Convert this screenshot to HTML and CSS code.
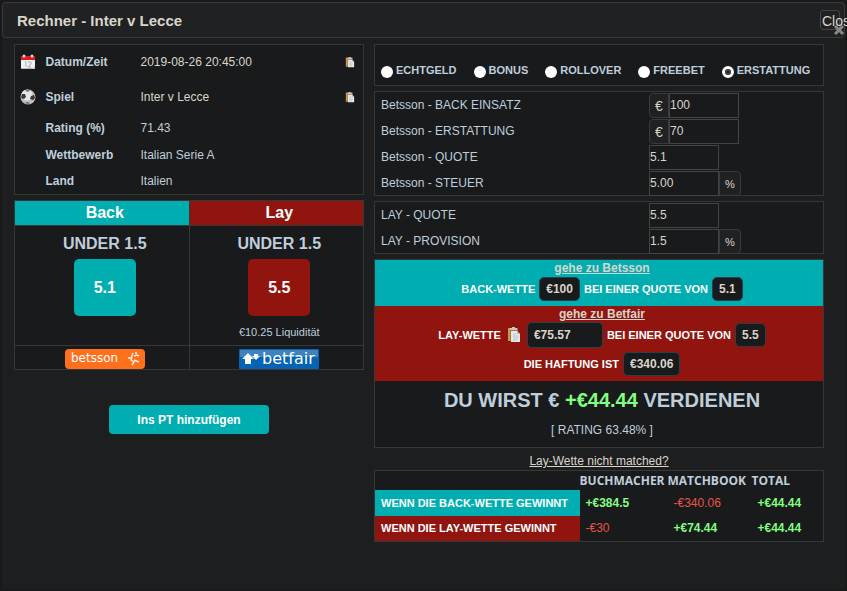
FILE: index.html
```html
<!DOCTYPE html>
<html lang="de">
<head>
  <meta charset="UTF-8">
  <meta name="viewport" content="width=device-width, initial-scale=1.0">
  <title>Rechner - Inter v Lecce</title>
  <link rel="stylesheet" href="styles.css">
</head>
<body>
  <!-- icons used more than once -->
  <svg class="sprite" width="0" height="0">
    <symbol id="paste" viewBox="0 0 14 16">
      <path d="M1 1h10v13H1z" fill="#a8743f"/>
      <path d="M1 1h2v13H1z" fill="#cf9553"/>
      <path d="M3 1h2V0h3v1h2v2H3z" fill="#c4c6c8"/>
      <path d="M4 4h6l3 3v8H4z" fill="#e6e9ea"/>
      <path d="M10 4v3h3z" fill="#b5b9bb"/>
      <path d="M6 7h3M6 9h5M6 11h5M6 13h4" stroke="#bcc0c2" fill="none"/>
    </symbol>
  </svg>

  <div class="dialog">
    <div class="titlebar">
      <h1>Rechner - Inter v Lecce</h1>
      <button class="close" type="button">Close<svg class="x" viewBox="0 0 10 10"><path d="M1 1l8 8M9 1l-8 8" stroke="#888" stroke-width="3"/></svg></button>
    </div>

    <div class="content">
      <div class="left">
        <table class="panel info">
          <tr class="tall">
            <td class="icon">
              <svg width="16" height="16" viewBox="0 0 16 16">
                <path d="M1 2h14v13H1z" fill="#f1f1f1"/>
                <path d="M1 2h14v4H1z" fill="#dd1c1c"/>
                <path d="M1 14h14v1H1z" fill="#b5b5b5"/>
                <circle cx="4" cy="2" r="1.5" fill="#ddd"/>
                <circle cx="12" cy="2" r="1.5" fill="#ddd"/>
                <path d="M5 8h1v5M8 8h3v2l-3 3h3" stroke="#aaa" fill="none"/>
                <path d="M12 15l3-3v3z" fill="#ccc"/>
              </svg>
            </td>
            <th>Datum/Zeit</th>
            <td class="light">2019-08-26 20:45:00</td>
            <td class="copy"><button type="button" aria-label="Kopieren"><svg width="10" height="11"><use href="#paste"/></svg></button></td>
          </tr>
          <tr class="tall">
            <td class="icon">
              <svg width="16" height="16" viewBox="0 0 16 16">
                <circle cx="8" cy="8" r="7.5" fill="#bdbdbd"/>
                <circle cx="7" cy="6" r="5.5" fill="#e6e6e6"/>
                <path d="M2 5l3 0 1 3-2 2-3-1zM11 7l3-1 1 3-2 2-3-1z" fill="#35383a"/>
                <path d="M5 1l4-0.5 1 1.5-3 1zM5 13l3 0 2 2-3 0z" fill="#777"/>
              </svg>
            </td>
            <th>Spiel</th>
            <td class="light">Inter v Lecce</td>
            <td class="copy"><button type="button" aria-label="Kopieren"><svg width="10" height="11"><use href="#paste"/></svg></button></td>
          </tr>
          <tr><td></td><th>Rating (%)</th><td>71.43</td><td></td></tr>
          <tr><td></td><th>Wettbewerb</th><td>Italian Serie A</td><td></td></tr>
          <tr><td></td><th>Land</th><td>Italien</td><td></td></tr>
        </table>

        <table class="odds">
          <tr><th class="teal">Back</th><th class="red">Lay</th></tr>
          <tr class="pick">
            <td>
              <h2>UNDER 1.5</h2>
              <button class="odd teal" type="button">5.1</button>
            </td>
            <td>
              <h2>UNDER 1.5</h2>
              <button class="odd red" type="button">5.5</button>
              <p>€10.25 Liquidität</p>
            </td>
          </tr>
          <tr class="brands">
            <td>
              <a href="#betsson" aria-label="betsson">
                <svg width="80" height="20" viewBox="0 0 80 20">
                  <rect width="80" height="20" rx="4" fill="#ff701c"/>
                  <text x="6" y="13" class="logo" font-size="12">betsson</text>
                  <path d="M63 9l3 0 2-5M67 8l-1 3 3 2-2 3M69 11l5 2M69 7l3-1 2 1" stroke="#ffe9d8" stroke-width="1.5" fill="none"/>
                  <circle cx="71" cy="4" r="1" fill="#fff"/>
                </svg>
              </a>
            </td>
            <td>
              <a href="#betfair" aria-label="betfair">
                <svg width="80" height="20" viewBox="0 0 80 20">
                  <rect width="80" height="20" rx="1" fill="#0463b4"/>
                  <path d="M1 1h78v7H1z" fill="#3d83c0"/>
                  <path d="M9 4l6 6h-3v5H6v-5H3zM15 5h4v2h2l-4 4-4-4h2z" fill="#fff"/>
                  <text x="23" y="15" class="logo" font-size="16">betfair</text>
                </svg>
              </a>
            </td>
          </tr>
        </table>

        <button class="add teal" type="button">Ins PT hinzufügen</button>
      </div>

      <form class="right">
        <div class="panel modes">
          <label><input type="radio" name="mode">ECHTGELD</label>
          <label><input type="radio" name="mode">BONUS</label>
          <label><input type="radio" name="mode">ROLLOVER</label>
          <label><input type="radio" name="mode">FREEBET</label>
          <label><input type="radio" name="mode" checked>ERSTATTUNG</label>
        </div>

        <div class="panel fields">
          <div class="field">
            <label for="stake">Betsson - BACK EINSATZ</label>
            <div class="group"><span class="pre">€</span><input type="text" id="stake" value="100"></div>
          </div>
          <div class="field">
            <label for="refund">Betsson - ERSTATTUNG</label>
            <div class="group"><span class="pre">€</span><input type="text" id="refund" value="70"></div>
          </div>
          <div class="field">
            <label for="back">Betsson - QUOTE</label>
            <div class="group"><input type="text" id="back" value="5.1"></div>
          </div>
          <div class="field">
            <label for="tax">Betsson - STEUER</label>
            <div class="group"><input type="text" id="tax" value="5.00"><span class="post">%</span></div>
          </div>
        </div>

        <div class="panel fields">
          <div class="field">
            <label for="lay">LAY - QUOTE</label>
            <div class="group"><input type="text" id="lay" value="5.5"></div>
          </div>
          <div class="field">
            <label for="commission">LAY - PROVISION</label>
            <div class="group"><input type="text" id="commission" value="1.5"><span class="post">%</span></div>
          </div>
        </div>

        <div class="panel result">
          <div class="bet teal">
            <a href="#betsson">gehe zu Betsson</a>
            <div class="line">BACK-WETTE <span class="value">€100</span> BEI EINER QUOTE VON <span class="value">5.1</span></div>
          </div>
          <div class="bet red">
            <a href="#betfair">gehe zu Betfair</a>
            <div class="line">
              <label for="laystake">LAY-WETTE</label>
              <svg class="paste" width="14" height="16"><use href="#paste"/></svg>
              <input type="text" id="laystake" class="value" value="€75.57">
              BEI EINER QUOTE VON <span class="value">5.5</span>
            </div>
            <div class="line">DIE HAFTUNG IST <span class="value">€340.06</span></div>
          </div>
          <h2>DU WIRST € <span class="plus">+€44.44</span> VERDIENEN</h2>
          <p>[ RATING 63.48% ]</p>
        </div>

        <a class="unmatched" href="#unmatched">Lay-Wette nicht matched?</a>

        <table class="panel totals">
          <tr><td></td><th>BUCHMACHER</th><th>MATCHBOOK</th><th>TOTAL</th></tr>
          <tr>
            <th class="teal">WENN DIE BACK-WETTE GEWINNT</th>
            <td class="plus">+€384.5</td><td class="minus">-€340.06</td><td class="plus">+€44.44</td>
          </tr>
          <tr>
            <th class="red">WENN DIE LAY-WETTE GEWINNT</th>
            <td class="minus">-€30</td><td class="plus">+€74.44</td><td class="plus">+€44.44</td>
          </tr>
        </table>
      </form>
    </div>
  </div>
</body>
</html>
```
FILE: styles.css
```css
* { box-sizing: border-box; }
body {
  margin: 0;
  padding: 2px;
  background: #19191a;
  color: #bfcedb;
  font: 12px "Liberation Sans", Arial, sans-serif;
  overflow: hidden;
}
h1, h2, p { margin: 0; }
button, input { font: inherit; }
button { cursor: pointer; border: 0; padding: 0; background: none; }
a { color: #d9d5cb; }
table { border-collapse: collapse; width: 100%; }
.sprite { position: absolute; }

.teal { background: #00adb0; color: #fff; }
.red { background: #91140e; color: #fff; }
.plus { color: #80ff80; font-weight: bold; }
.minus { color: #e8534a; }

.dialog {
  background: #1d1e1f;
  min-height: calc(100vh - 4px);
}
.titlebar {
  display: flex;
  align-items: center;
  justify-content: space-between;
  height: 36px;
  padding: 0 4px 0 14px;
  border: 1px solid #3a3a3b;
  border-radius: 4px;
  background: #202122;
}
.titlebar h1 { font-size: 15px; color: #d9d5cb; }
.close {
  position: relative;
  width: 20px;
  height: 20px;
  border: 1px solid #444;
  border-radius: 3px;
  color: #d9d5cb;
  font-size: 14px;
  text-align: left;
  padding: 2px 0 0 1px;
  white-space: nowrap;
}
.close .x {
  position: absolute;
  right: -5px;
  bottom: -6px;
  width: 10px;
  height: 10px;
}

.content {
  display: grid;
  grid-template-columns: minmax(0, 7fr) minmax(0, 9fr);
  gap: 10px;
  padding: 6px 21px 0 12px;
}
.panel {
  border: 1px solid #363738;
  background: #191a1b;
}
.left, .right {
  display: flex;
  flex-direction: column;
  gap: 5px;
}

/* match info */
.info tr { height: 27px; }
.info .tall { height: 35px; }
.info tr:last-child { height: 26px; }
.info th { width: 95px; text-align: left; }
.info th, .info td { padding: 0; }
.info td:first-child { width: 31px; }
.info .icon { padding-left: 5px; }
.info .light { color: #d9d5cb; }
.info .copy { width: 19px; padding-top: 3px; }
.info svg { display: block; }

/* back / lay odds */
.odds { background: #191a1b; text-align: center; table-layout: fixed; }
.odds th, .odds td { border: 1px solid #363738; padding: 0 0 0 6px; }
.odds th { height: 25px; font-size: 16px; }
.odds h2 { font-size: 16px; line-height: 18px; margin-bottom: 6px; }
.odds .pick td { height: 120px; vertical-align: top; padding-top: 9px; }
.odds p { font-size: 11px; margin-top: 10px; }
.odd {
  width: 62px;
  height: 57px;
  border-radius: 5px;
  font-size: 16px;
  font-weight: bold;
}
.brands td { height: 24px; }
.brands svg { display: block; margin: 3px auto 0; }
.logo { font-family: "DejaVu Sans", sans-serif; fill: #fff; }
.add {
  align-self: center;
  width: 160px;
  height: 29px;
  margin-top: 30px;
  border-radius: 4px;
  font-weight: bold;
}

/* calculator */
.modes {
  display: flex;
  gap: 17px;
  height: 42px;
  padding: 10px 6px 0;
  font-size: 11px;
  font-weight: bold;
}
.modes label { display: flex; align-items: center; gap: 3px; }
.modes input {
  appearance: none;
  width: 12px;
  height: 12px;
  margin: 4px 0 0;
  border-radius: 50%;
  background: #fff;
}
.modes input:checked { background: #333; border: 3px solid #fff; }
.field {
  display: grid;
  grid-template-columns: 274px 1fr;
  height: 26px;
  align-items: center;
}
.field:last-child { height: 25px; }
.field label { padding-left: 6px; }
.group { display: flex; padding-top: 1px; }
.group input {
  width: 70px;
  height: 25px;
  padding: 0 0 2px;
  border: 1px solid #444445;
  background: #191a1b;
  color: #d9d5cb;
}
.pre, .post {
  display: flex;
  align-items: center;
  justify-content: center;
  height: 25px;
  border: 1px solid #3a3a3b;
  background: #202122;
  color: #d9d5cb;
}
.pre { width: 20px; border-radius: 4px 0 0 4px; font-size: 14px; }
.post { width: 22px; border-radius: 0 4px 4px 0; font-size: 11px; }

.result { text-align: center; }
.bet { font-weight: bold; padding: 1px 0 0 6px; }
.bet a { display: block; line-height: 15px; }
.line {
  display: flex;
  align-items: center;
  justify-content: center;
  gap: 4px;
  height: 26px;
  font-size: 11px;
}
.line + .line { margin-top: 3px; }
.bet.teal { height: 46px; }
.bet.red { height: 75px; }
.paste { margin: 0 2px; }
.value {
  height: 24px;
  padding: 4px 6px;
  border: 1px solid #2b3e4a;
  border-radius: 5px;
  background: #191a1b;
  color: #d9d5cb;
  font-size: 12px;
}
input.value { width: 76px; height: 26px; font-weight: bold; }
.result h2 { font-size: 20px; line-height: 38px; padding-left: 6px; }
.result p { line-height: 22px; padding: 0 0 6px 6px; }
.unmatched { align-self: center; line-height: 16px; }

.totals { margin-top: -4px; table-layout: fixed; }
.totals th, .totals td {
  height: 26px;
  padding: 0 6px;
  text-align: left;
  white-space: nowrap;
}
.totals th { font-size: 11px; }
.totals tr:last-child th, .totals tr:last-child td { height: 25px; }
.totals tr:first-child td, .totals tr:first-child th { height: 19px; padding: 0; }
.totals tr:first-child th { font: bold 12px/19px "Open Sans", sans-serif; }
.totals td:first-child { width: 205px; }
.totals th:nth-child(2) { width: 88px; }
.totals th:nth-child(3) { width: 84px; }
```
